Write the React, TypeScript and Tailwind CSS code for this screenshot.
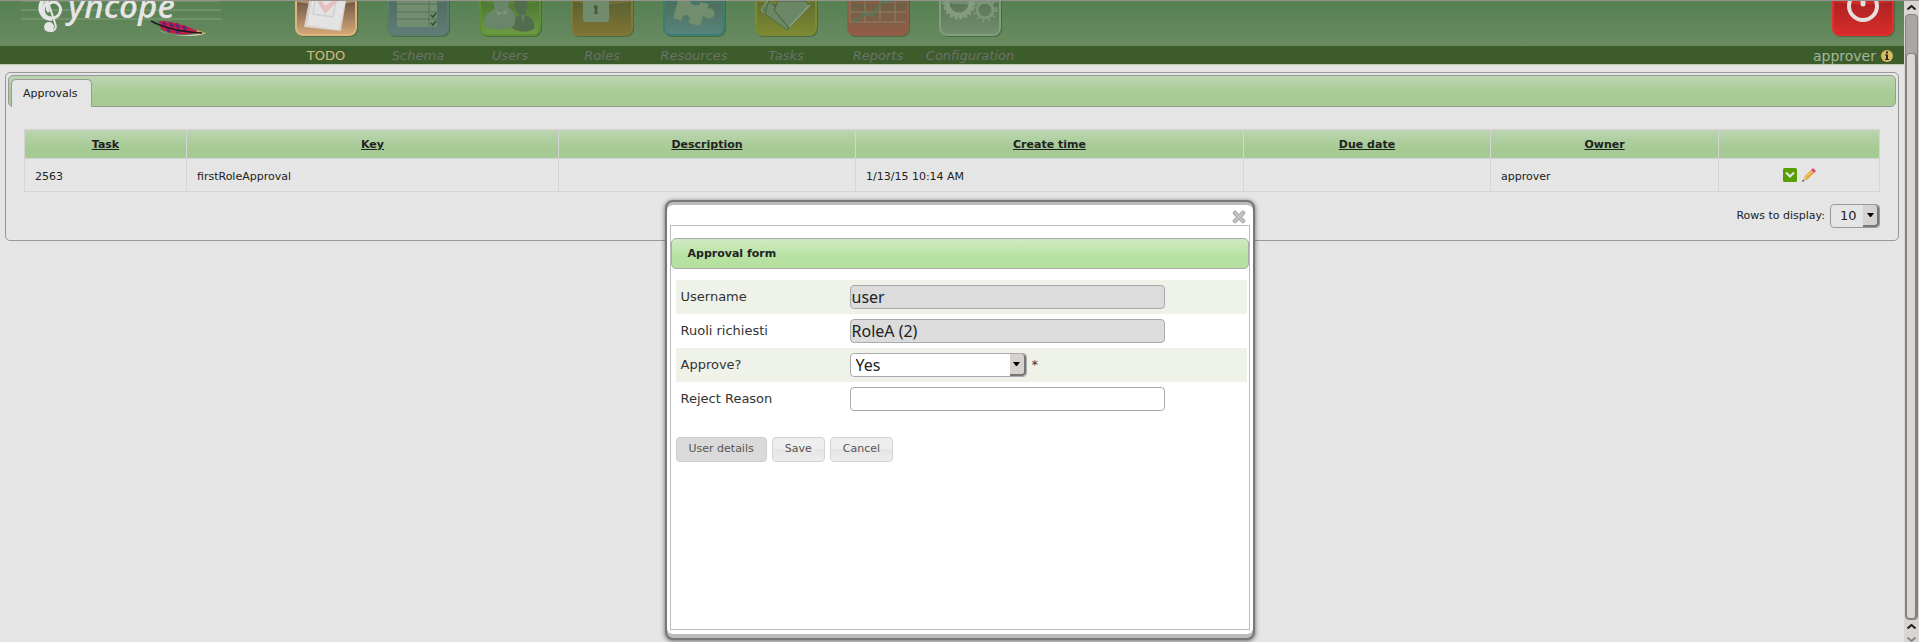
import React, { useState } from "react";

type ModuleProps = { label: string; active?: boolean; children: React.ReactNode };

const Frame = ({ id, top, bottom, edge, children }: { id: string; top: string; bottom: string; edge: string; children?: React.ReactNode }) => (
  <svg className="block h-9 w-16" viewBox="0 0 64 36" aria-hidden="true">
    <defs>
      <linearGradient id={id} x1="0" y1="0" x2="0" y2="1">
        <stop offset="0.4" stopColor={top} />
        <stop offset="1" stopColor={bottom} />
      </linearGradient>
    </defs>
    <rect x="2" y="-26" width="62" height="62" rx="8" fill="#2d4a2b" opacity="0.45" />
    <rect x="1" y="-27" width="62" height="62" rx="8" fill={edge} />
    <rect x="3" y="-25" width="58" height="58" rx="6" fill={`url(#${id})`} />
    <path d="M3 0H61V1Q32 6 3 1Z" fill={edge} opacity="0.6" />
    {children}
  </svg>
);

const TodoIcon = () => (
  <Frame id="todo" top="#6b5443" bottom="#d3a778" edge="#dfb47c">
    <path d="M15 0H52L47 30L28 28L10 26Z" fill="#d9d2cc" />
    <path d="M18 0H51L45 29L13 24Z" fill="#e4e3e3" />
    <path d="M21 0L19 13L39 16L42 0" fill="none" stroke="#cfd0d4" strokeWidth="1.5" />
    <path d="M23 0H28L31 5L38 0H44L31 13Z" fill="#e6c0c0" />
  </Frame>
);
const SchemaIcon = () => (
  <Frame id="schema" top="#4f6c5c" bottom="#607c78" edge="#5b7c70">
    <path d="M11 0H51V26H11Z" fill="#728e70" />
    <path d="M11 3H51M11 11H51M11 18H51M43 0V26" stroke="#55735a" strokeWidth="1" />
    <path d="M45 14L47 16L50 12M45 22L47 24L50 20" fill="none" stroke="#304c34" strokeWidth="1.5" />
  </Frame>
);
const UsersIcon = () => (
  <Frame id="users" top="#4d7433" bottom="#6b9a43" edge="#5f8d31">
    <path d="M34 27C33 18 37 17 42 14C37 9 35 3 37 -4H49C50 4 49 9 47 14C54 17 57 19 56 28Q45 34 34 27Z" fill="#526c4e" />
    <path d="M6 25C5 14 10 12 17 8L15 0H31L30 7C37 11 39 15 36 25Q20 32 6 25Z" fill="#69866a" />
    <path d="M17 8Q23 15 30 7L28 14L24 12L20 15Z" fill="#7c957b" />
    <path d="M43 14L45 22L47 14" fill="#667f62" />
  </Frame>
);
const RolesIcon = () => (
  <Frame id="roles" top="#596032" bottom="#7e7434" edge="#7f7837">
    <rect x="13" y="-5" width="26" height="26" rx="2" fill="#718c6d" />
    <path d="M24 13L25 9Q22 4 26 4Q29 5 27 9L28 13Z" fill="#4c5a31" />
  </Frame>
);
const ResourcesIcon = () => (
  <Frame id="resources" top="#4c6d58" bottom="#57837c" edge="#3b7f74">
    <path d="M16 0L11 17L20 20Q19 13 25 14Q30 17 26 22L38 25L41 15Q47 20 52 15Q54 9 48 7Q43 7 44 10L47 3L38 1Q39 5 33 4Q28 4 29 0Z" fill="#728d6d" />
  </Frame>
);
const TasksIcon = () => (
  <Frame id="tasks" top="#5e6c31" bottom="#7d8932" edge="#7d8a32">
    <path d="M13 0L7 9L33 28L37 23Z" fill="#607e57" stroke="#86a078" strokeWidth="1" />
    <path d="M15 0L11 13L33 29L38 23Z" fill="#6a8864" stroke="#4e6b49" strokeWidth="1" />
    <path d="M24 0L20 9L35 27L56 5L51 0Z" fill="#6a8865" stroke="#425f3f" strokeWidth="1" />
    <path d="M35 26L56 4" stroke="#8ba480" strokeWidth="1.5" />
  </Frame>
);
const ReportsIcon = () => (
  <Frame id="reports" top="#6a6147" bottom="#925b45" edge="#915d45">
    <path d="M4 11H60M4 21H60M4 0V21M19 0V21M34 0V21M49 0V21" stroke="#8c8065" strokeWidth="1" />
    <path d="M9 20L18 13L27 14L36 1H46" fill="none" stroke="#577759" strokeWidth="2" />
    <circle cx="9" cy="20" r="2" fill="#577759" /><circle cx="18" cy="13" r="2" fill="#577759" /><circle cx="27" cy="14" r="2" fill="#577759" />
  </Frame>
);
const ConfigIcon = () => (
  <Frame id="config" top="#587455" bottom="#718d6d" edge="#829d7e">
    <circle cx="21" cy="2" r="15" fill="none" stroke="#849b7e" strokeWidth="3" strokeDasharray="3 2" />
    <circle cx="21" cy="2" r="12" fill="none" stroke="#849b7e" strokeWidth="5" />
    <circle cx="47" cy="9" r="11" fill="none" stroke="#7c9577" strokeWidth="3" strokeDasharray="2 4" />
    <circle cx="47" cy="9" r="8" fill="none" stroke="#7c9577" strokeWidth="3" />
  </Frame>
);
const PowerIcon = () => (
  <Frame id="power" top="#a92322" bottom="#d82b2b" edge="#e42e2c">
    <circle cx="32" cy="5" r="14" fill="none" stroke="#e5dfdd" strokeWidth="4" />
    <path d="M32 -8V3" stroke="#e5dfdd" strokeWidth="5" strokeLinecap="round" />
  </Frame>
);

const Module = ({ label, active, children }: ModuleProps) => (
  <li className="w-23">
    <a href="#" className="flex flex-col items-center">
      <span className="h-[45px]">{children}</span>
      <span className={active ? "h-[18px] text-[13px] leading-5 text-[#d9ba7e]" : "h-[18px] text-[13px] italic leading-5 text-[#6c726a]"}>{label}</span>
    </a>
  </li>
);

const Logo = () => (
  <svg className="block h-[45px] w-[221px]" viewBox="0 0 221 45" role="img" aria-label="Syncope">
    <path d="M21 0H221M21 9H221M21 18H221" stroke="#84a17d" strokeWidth="1" />
    <path d="M47 -2L55 22C58 30 51 32 48 28" fill="none" stroke="#e5e5e5" strokeWidth="2" />
    <circle cx="49" cy="26" r="5" fill="#e5e5e5" />
    <path d="M48 0C41 6 42 15 50 17C60 18 64 7 57 2C51 -1 44 5 49 11" fill="none" stroke="#e5e5e5" strokeWidth="3" />
    <path d="M43 -1C37 8 42 18 52 18" fill="none" stroke="#e5e5e5" strokeWidth="4" />
    <text x="68" y="17" fill="#e5e5e5" fontFamily="'Open Sans', 'Noto Sans', sans-serif" fontStyle="italic" fontWeight="600" fontSize="33">yncope</text>
    <path d="M155 26C161 32 174 35 190 34L206 32C199 36 179 36 162 31Z" fill="#d9dcd5" />
    <path d="M159 20C175 20 190 26 199 31C188 35 171 34 161 28Z" fill="#c41f48" />
    <path d="M163 21L166 24M170 22L173 26M176 23L179 27M183 25L186 29M167 28L170 31M176 30L179 32" stroke="#5e2675" strokeWidth="3" />
    <path d="M197 29L206 32L196 34Z" fill="#d5a84d" />
    <path d="M151 20C166 28 181 31 202 32" fill="none" stroke="#191c25" strokeWidth="1.5" />
  </svg>
);

const Arrow = () => (
  <span className="pointer-events-none absolute inset-y-px right-px flex w-4 items-center justify-center rounded-r-sm border-r-2 border-b-2 border-[#777] bg-[#d6d2cf]">
    <svg className="h-1 w-[7px]" viewBox="0 0 7 4" aria-hidden="true"><path d="M0 0H7L4 4H3Z" fill="#000" /></svg>
  </span>
);

const columns: [string, string][] = [
  ["Task", "w-[162px]"],
  ["Key", "w-[372px]"],
  ["Description", "w-[297px]"],
  ["Create time", "w-[388px]"],
  ["Due date", "w-[247px]"],
  ["Owner", "w-[228px]"],
];
const task = ["2563", "firstRoleApproval", "", "1/13/15 10:14 AM", "", "approver"];

const Header = () => (
  <header className="flex items-start justify-between border-t border-b border-t-[#96928d] border-b-[#b9ccb0] bg-[linear-gradient(to_bottom,#578053_0px,#698b61_45px,#3c5c2c_45px)]">
    <div className="flex">
      <div className="w-[280px]"><Logo /></div>
      <nav aria-label="Modules">
        <ul className="flex">
          <Module label="TODO" active><TodoIcon /></Module>
          <Module label="Schema"><SchemaIcon /></Module>
          <Module label="Users"><UsersIcon /></Module>
          <Module label="Roles"><RolesIcon /></Module>
          <Module label="Resources"><ResourcesIcon /></Module>
          <Module label="Tasks"><TasksIcon /></Module>
          <Module label="Reports"><ReportsIcon /></Module>
          <Module label="Configuration"><ConfigIcon /></Module>
        </ul>
      </nav>
    </div>
    <div className="flex flex-col items-end pr-[9px]">
      <a href="#" aria-label="Logout" className="h-[45px]"><PowerIcon /></a>
      <div className="flex h-[18px] gap-[5px] pr-0.5">
        <span className="text-[14px] leading-5 text-[#a4b79a]">approver</span>
        <svg className="mt-1 size-3" viewBox="0 0 12 12" aria-hidden="true">
          <circle cx="6" cy="6" r="6" fill="#d8bd60" />
          <path d="M5 1.5H7V3.5H5ZM4 4.5H7V9H8V10H4V9H5V5.5H4Z" fill="#2b2b2b" />
        </svg>
      </div>
    </div>
  </header>
);

const Approvals = () => (
  <main className="mx-[5px] mt-[7px] rounded-[5px] border border-[#999] p-0.5 pb-3 text-[11px] text-[#222]">
    <div role="tablist" className="flex h-8 items-end rounded-[5px] border border-[#999] bg-[linear-gradient(to_bottom,#bdd5b1,#a6cb95_60%,#a5ca93)] pl-0.5">
      <button role="tab" aria-selected="true" className="-mb-px h-7 rounded-t-[5px] border border-b-0 border-[#999] bg-[#e5e5e5] pt-0.5 pr-[13px] pl-[11px]">Approvals</button>
    </div>
    <div className="px-4 pt-[22px]">
      <table className="w-full table-fixed border-collapse">
        <thead>
          <tr className="h-[29px] bg-[linear-gradient(to_bottom,#bdd5b1,#a6cb95_60%,#a5ca93)]">
            {columns.map(([name, width]) => (
              <th key={name} className={`${width} border border-[#d4d4d4] pt-0.5 text-center font-bold`}><a href="#" className="underline">{name}</a></th>
            ))}
            <th className="border border-[#d4d4d4]" aria-label="Actions" />
          </tr>
        </thead>
        <tbody>
          <tr className="h-[33px]">
            {task.map((value, i) => <td key={i} className="border border-[#d4d4d4] px-2.5 pt-1">{value}</td>)}
            <td className="border border-[#d4d4d4]">
              <div className="flex items-center justify-center gap-[5px]">
                <button aria-label="Claim">
                  <svg className="block size-[14px]" viewBox="0 0 14 14"><rect width="14" height="14" rx="1.5" fill="#55a000" /><path d="M3 4.5L7 8.5L11 4.5" fill="none" stroke="#e5e5e5" strokeWidth="2.2" /></svg>
                </button>
                <button aria-label="Edit">
                  <svg className="block size-[14px]" viewBox="0 0 14 14"><path d="M0.5 13.5L2 9L5 12Z" fill="#ddc29e" /><path d="M2 9L9 2L12 5L5 12Z" fill="#eaa63c" /><path d="M3 10L10 3" stroke="#f7d57d" /><path d="M9 2L11 0L14 3L12 5Z" fill="#d24e6c" /><path d="M0 14L1 11.5L2.5 13Z" fill="#555" /></svg>
                </button>
              </div>
            </td>
          </tr>
        </tbody>
      </table>
      <div className="mt-3 flex items-center justify-end gap-[5px]">
        <label htmlFor="rows">Rows to display:</label>
        <span className="relative">
          <select id="rows" className="block h-6 w-[50px] appearance-none rounded border border-[#999] bg-[#e5e5e5] pl-[9px] text-[13px]"><option>10</option><option>20</option></select>
          <Arrow />
        </span>
      </div>
    </div>
  </main>
);

const Row = ({ id, label, shaded, children }: { id: string; label: string; shaded?: boolean; children: React.ReactNode }) => (
  <div className={shaded ? "flex h-[34px] items-center bg-[#eff2e9] pl-[5px]" : "flex h-[34px] items-center pl-[5px]"}>
    <label htmlFor={id} className="w-[169px] text-[13px]">{label}</label>
    {children}
  </div>
);

const Dialog = ({ onClose }: { onClose: () => void }) => (
  <div className="absolute inset-x-0 top-[200px] flex justify-center">
    <section role="dialog" aria-label="Approval form" className="w-[590px] rounded-lg border-2 border-[#777] bg-[#bbb] pt-[3px] pb-1 text-[#333] shadow-[0_1px_5px_#666]">
      <div className="rounded-md bg-white px-[3px] pb-1">
        <div className="flex h-5 items-center justify-end pr-1 pt-1">
          <button aria-label="Close" onClick={onClose}>
            <svg className="block size-[14px]" viewBox="0 0 14 14"><path d="M3 3L11 11M11 3L3 11" stroke="#a8a8a8" strokeWidth="4.5" strokeLinecap="round" /><path d="M3 3L11 11M11 3L3 11" stroke="#c1c1c1" strokeWidth="2.5" strokeLinecap="round" /></svg>
          </button>
        </div>
        <form className="min-h-[405px] border border-[#bbb] pt-3" onSubmit={(e) => e.preventDefault()}>
          <h2 className="h-[31px] rounded-[5px] border border-[#aaa] bg-[linear-gradient(to_bottom,#cfeac2,#b7e2a2_65%,#b5e09f)] pl-4 text-[11px] leading-[30px] font-bold text-[#222]">Approval form</h2>
          <div className="mt-[11px] pr-0.5 pl-[5px]">
            <Row id="username" label="Username" shaded><input id="username" disabled defaultValue="user" className="h-6 w-[315px] rounded border border-[#aaa] bg-[#dcdcdc] px-px font-['Noto_Sans'] text-[16px] text-[#222]" /></Row>
            <Row id="requested" label="Ruoli richiesti"><input id="requested" disabled defaultValue="RoleA (2)" className="h-6 w-[315px] rounded border border-[#aaa] bg-[#dcdcdc] px-px font-['Noto_Sans'] text-[16px] text-[#222]" /></Row>
            <Row id="approve" label="Approve?" shaded>
              <span className="relative">
                <select id="approve" className="block h-6 w-[177px] appearance-none rounded border border-[#aaa] bg-white pl-[5px] font-['Noto_Sans'] text-[16px] leading-[22px] text-[#222]"><option>Yes</option><option>No</option></select>
                <Arrow />
              </span>
              <span className="pl-[5px] text-[13px]">*</span>
            </Row>
            <Row id="reason" label="Reject Reason"><input id="reason" className="h-6 w-[315px] rounded border border-[#aaa] bg-white px-px font-['Noto_Sans'] text-[16px]" /></Row>
            <div className="mt-[21px] flex gap-[5px] text-[11px] text-[#555]">
              <button type="button" className="h-[25px] rounded border border-[#ccc] bg-[#dadada] px-3">User details</button>
              <button type="submit" className="h-[25px] rounded border border-[#d3d3d3] bg-[linear-gradient(to_bottom,#eee_50%,#e5e5e5_50%,#ededed)] px-3">Save</button>
              <button type="button" onClick={onClose} className="h-[25px] rounded border border-[#d3d3d3] bg-[linear-gradient(to_bottom,#eee_50%,#e5e5e5_50%,#ededed)] px-3">Cancel</button>
            </div>
          </div>
        </form>
      </div>
    </section>
  </div>
);

const Chevron = ({ down }: { down?: boolean }) => (
  <svg className="h-[5px] w-[9px]" viewBox="0 0 9 5"><path d={down ? "M0.5 0.5L4.5 4L8.5 0.5" : "M0.5 4.5L4.5 1L8.5 4.5"} fill="none" stroke={down ? "#888" : "#222"} strokeWidth="2" /></svg>
);

const Scrollbar = () => (
  <div aria-hidden="true" className="flex w-[15px] flex-col items-center border-t border-[#96928d] bg-[#d8d5d3]">
    <div className="flex h-[13px] items-center"><Chevron /></div>
    <div className="flex w-[13px] flex-1 flex-col rounded border border-[#8a8480] bg-[#aca6a3] pt-[38px]">
      <div className="flex-1 rounded border border-r-2 border-[#857f7b] bg-[#dad7d4]" />
    </div>
    <div className="flex h-[22px] flex-col items-center justify-between pt-1"><Chevron /><Chevron down /></div>
  </div>
);

export default function App() {
  const [open, setOpen] = useState(true);
  return (
    <div className="relative flex min-h-screen bg-[#e5e5e5] font-['DejaVu_Sans',sans-serif]">
      <div className="min-w-0 flex-1">
        <Header />
        <Approvals />
      </div>
      <Scrollbar />
      {open && <Dialog onClose={() => setOpen(false)} />}
    </div>
  );
}
